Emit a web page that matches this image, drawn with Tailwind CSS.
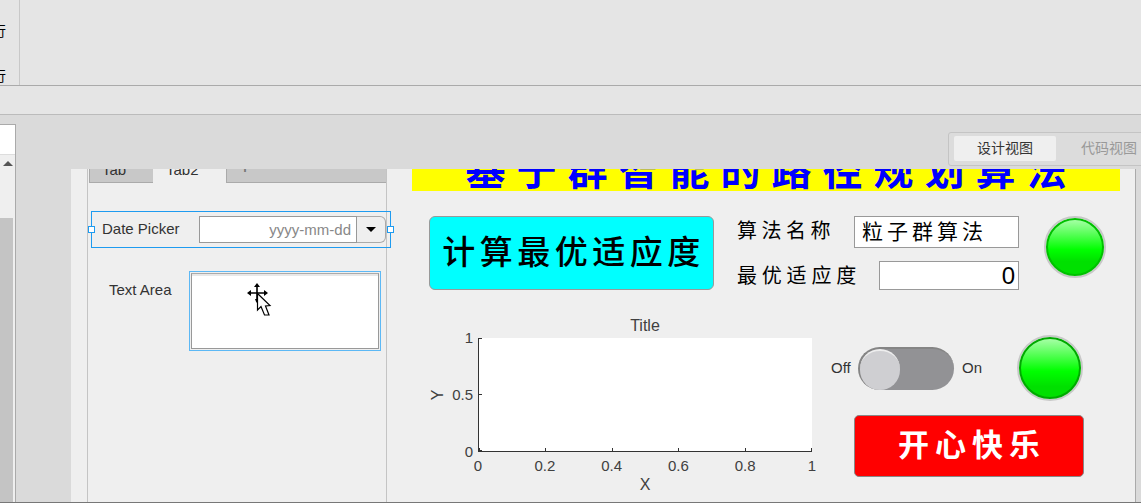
<!DOCTYPE html>
<html lang="zh-CN">
<head>
    <meta charset="UTF-8">
    <title>App Designer</title>
    <script src="https://cdn.jsdelivr.net/npm/@tailwindcss/browser@4"></script>
</head>
<body class="overflow-hidden">
<div class="relative flex h-[503px] w-[1141px] flex-col overflow-hidden border-b border-[#777] bg-[#dadada] font-['Liberation_Sans','Noto_Sans_CJK_SC',sans-serif] text-[#333]">
    <!-- toolstrip -->
    <div class="flex h-[86px] shrink-0 border-b border-[#aaa] bg-[#e5e5e5]">
        <div class="flex w-[20px] flex-col overflow-hidden border-r border-[#c8c8c8] text-[14px] leading-[20px] text-black">
            <div class="h-[2px] w-[3px] bg-[#5a9a3a]"></div>
            <span class="-ml-[8px] mt-[21px]">行</span>
            <span class="-ml-[8px] mt-[25px]">行</span>
        </div>
    </div>
    <div class="h-[29px] shrink-0 border-b border-[#bbb] bg-[#e5e5e5]"></div>

    <!-- main area -->
    <div class="flex min-h-0 flex-1">
        <div class="mt-[9px] flex w-[16px] shrink-0 flex-col border-r border-t border-[#aaa] bg-[#efefef]">
            <div class="h-[29px] bg-white"></div>
            <div class="flex h-[64px] justify-center border-t border-[#ddd] pt-[6px]">
                <div class="h-0 w-0 border-x-[5px] border-b-[5px] border-x-transparent border-b-[#555]"></div>
            </div>
            <div class="w-[13px] flex-1 bg-[#c4c4c4]"></div>
        </div>
        <div class="w-[55px] shrink-0"></div>

        <!-- design canvas -->
        <div class="mt-[54px] flex h-[333px] w-[1065px] shrink-0 overflow-hidden border-r border-[#aaa] bg-[#efefef]">
            <!-- tab group -->
            <div class="ml-[16px] flex h-[347px] w-[300px] shrink-0 -mt-[14px] flex-col border-x border-[#c4c4c4]">
                <div class="flex h-[28px] shrink-0 pl-[1px] text-[15px] leading-[20px]">
                    <div class="w-[64px] border-b border-l border-[#aaa] bg-[#c8c8c8] pl-[12px] pt-[5px]">Tab</div>
                    <div class="w-[73px] pl-[13px] pt-[5px]">Tab2</div>
                    <div class="flex-1 overflow-hidden border-b border-l border-[#aaa] bg-[#c8c8c8] pl-[11px] text-[24px] leading-[22px] text-[#777]">+</div>
                </div>

                <div class="relative ml-[3px] mt-[28px] flex h-[37px] w-[300px] shrink-0 items-center border border-[#1e9bf0] pl-[10px] text-[15px]">
                    <span class="w-[97px]">Date Picker</span>
                    <div class="flex h-[27px]">
                        <div class="w-[158px] border border-[#999] bg-white pr-[5px] text-right leading-[25px] text-[#888]">yyyy-mm-dd</div>
                        <div class="flex w-[29px] items-center justify-center rounded-r-[6px] border border-l-0 border-[#aaa] bg-[#efefef]">
                            <div class="h-0 w-0 border-x-[5px] border-t-[5px] border-x-transparent border-t-black"></div>
                        </div>
                    </div>
                    <div class="absolute -left-[4px] top-[14px] h-[7px] w-[7px] border border-[#1e9bf0] bg-white"></div>
                    <div class="absolute -right-[4px] top-[14px] h-[7px] w-[7px] border border-[#1e9bf0] bg-white"></div>
                </div>

                <div class="mt-[23px] flex shrink-0 text-[15px]">
                    <span class="ml-[21px] w-[80px] pt-[8px]">Text Area</span>
                    <div class="relative h-[80px] w-[192px] border border-[#5cb8f5] p-[1px]">
                        <div class="h-full border border-[#999] border-t-[#aaa] bg-white"><div class="h-[2px] bg-[#e8e8e8]"></div></div>
                        <svg class="absolute left-[56px] top-[10px]" width="26" height="36" viewBox="0 0 26 36">
                            <path d="M1 11 L5 8 V14 Z M22 11 L18 8 V14 Z M11 1 L8 5 H14 Z M9 17 L12 17 L10.5 21 Z" fill="#000"/>
                            <path d="M5 11 H18 M11 5 V18" stroke="#000" stroke-width="1.6" fill="none"/>
                            <path d="M11.5 11.5 V28 L15 24.5 L18.5 33 H23 L19.5 24 L24 23.5 Z" fill="#fff" stroke="#000" stroke-width="1.2"/>
                        </svg>
                    </div>
                </div>
            </div>

            <!-- right part of the app -->
            <div class="flex min-w-0 flex-1 flex-col">
                <div class="ml-[25px] -mt-[14px] h-[36px] w-[708px] shrink-0 overflow-hidden bg-[#ffff00] pl-[11px] text-center text-[40px] font-bold leading-[32px] tracking-[11px] whitespace-nowrap text-[#0000ff]">基于群智能的路径规划算法</div>

                <div class="mt-[25px] flex shrink-0 items-start">
                    <button class="ml-[42px] h-[74px] w-[285px] rounded-[6px] border border-[#999] bg-[#00ffff] pl-[4px] text-[33px] font-medium tracking-[4.5px] whitespace-nowrap text-black">计算最优适应度</button>
                    <div class="ml-[23px] flex w-[282px] flex-col text-black">
                        <div class="flex h-[32px] items-center justify-between">
                            <span class="-mt-[2px] text-[20px] tracking-[4.5px]">算法名称</span>
                            <div class="h-[32px] w-[165px] border border-[#999] bg-white pl-[7px] text-[21px] leading-[30px] tracking-[4px]">粒子群算法</div>
                        </div>
                        <div class="mt-[13px] flex h-[29px] items-center justify-between">
                            <span class="mt-[1px] text-[20px] tracking-[4.8px]">最优适应度</span>
                            <div class="h-[29px] w-[140px] border border-[#999] bg-white pr-[3px] text-right text-[24px] leading-[27px]">0</div>
                        </div>
                    </div>
                    <div class="ml-[25px] h-[62px] w-[62px] rounded-full border-2 border-[#c8c8c8] bg-[linear-gradient(#b0ffb0,#00ff00_55%,#00e000_75%)] shadow-[inset_0_0_0_2px_#00c000]"></div>
                </div>

                <div class="mt-[27px] flex shrink-0 items-start">
                    <!-- axes -->
                    <div class="ml-[44px] flex w-[381px] shrink-0 text-[15px] leading-[16px] text-[#404040]">
                        <div class="mt-[21px] flex h-[114px] w-[14px] items-center justify-center"><span class="-rotate-90 text-[16px]">Y</span></div>
                        <div class="mt-[21px] flex h-[114px] w-[28px] flex-col items-end justify-between">
                            <div class="flex h-0 items-center">1</div>
                            <div class="flex h-0 items-center">0.5</div>
                            <div class="flex h-0 items-center">0</div>
                        </div>
                        <div class="ml-[5px] flex w-[334px] flex-col">
                            <div class="h-[21px] text-center text-[16px] leading-[18px]">Title</div>
                            <div class="relative h-[114px] border-b border-l border-[#333] bg-white">
                                <div class="absolute inset-x-0 bottom-0 flex justify-between">
                                    <div class="h-[3px] w-px bg-[#333]"></div>
                                    <div class="h-[3px] w-px bg-[#333]"></div>
                                    <div class="h-[3px] w-px bg-[#333]"></div>
                                    <div class="h-[3px] w-px bg-[#333]"></div>
                                    <div class="h-[3px] w-px bg-[#333]"></div>
                                    <div class="h-[3px] w-px bg-[#333]"></div>
                                </div>
                                <div class="absolute inset-y-0 left-0 flex flex-col justify-between">
                                    <div class="h-px w-[3px] bg-[#333]"></div>
                                    <div class="h-px w-[3px] bg-[#333]"></div>
                                    <div class="h-px w-[3px] bg-[#333]"></div>
                                </div>
                            </div>
                            <div class="mt-[6px] flex justify-between">
                                <div class="flex w-0 justify-center">0</div>
                                <div class="flex w-0 justify-center">0.2</div>
                                <div class="flex w-0 justify-center">0.4</div>
                                <div class="flex w-0 justify-center">0.6</div>
                                <div class="flex w-0 justify-center">0.8</div>
                                <div class="flex w-0 justify-center">1</div>
                            </div>
                            <div class="mt-[3px] text-center text-[16px] leading-[16px]">X</div>
                        </div>
                    </div>

                    <!-- switch, lamp, button -->
                    <div class="ml-[19px] flex flex-col pt-[18px]">
                        <div class="flex h-[66px] items-center text-[15px]">
                            <span class="w-[27px]">Off</span>
                            <div class="h-[43px] w-[96px] rounded-full border-2 border-[#858585] border-b-0 border-r-0 bg-[#929295]">
                                <div class="h-[41px] w-[40px] rounded-full border-t-2 border-[#eee] bg-[#cfcfd2]"></div>
                            </div>
                            <span class="ml-[8px] w-[55px]">On</span>
                            <div class="h-[66px] w-[66px] rounded-full border-2 border-[#c8c8c8] bg-[linear-gradient(#b0ffb0,#00ff00_55%,#00e000_80%)] shadow-[inset_0_0_0_2px_#00a800]"></div>
                        </div>
                        <button class="ml-[23px] mt-[14px] h-[62px] w-[230px] rounded-[5px] border border-[#888] bg-[#ff0000] pl-[6px] text-[31px] font-bold tracking-[6px] text-white">开心快乐</button>
                    </div>
                </div>
            </div>
        </div>
    </div>

    <!-- view switcher -->
    <div class="absolute left-[948px] top-[132px] flex h-[34px] w-[200px] rounded-[3px] border border-[#c4c4c4] bg-[#dcdcdc] text-[14px] leading-[25px]">
        <div class="ml-[5px] mt-[3px] h-[25px] w-[102px] rounded-[2px] bg-[#efefef] text-center text-[#333]">设计视图</div>
        <div class="ml-[25px] mt-[3px] text-[#999]">代码视图</div>
    </div>
</div>
</body>
</html>
